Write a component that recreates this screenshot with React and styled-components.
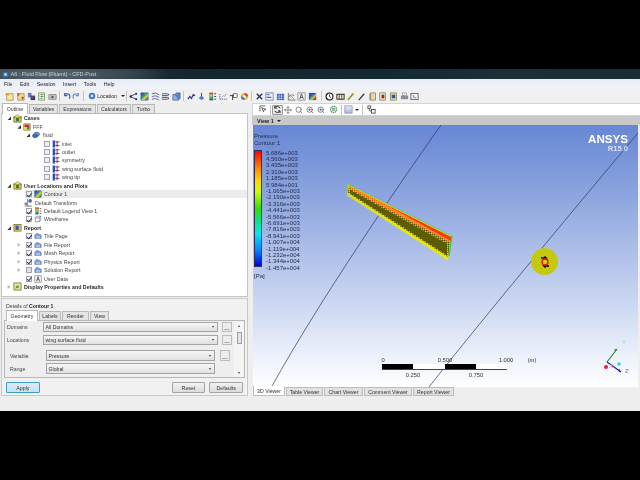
import React from "react";
import styled, { createGlobalStyle } from "styled-components";
import { Move, ZoomIn, Search } from "lucide-react";

const GlobalStyle = createGlobalStyle`
  html, body { margin: 0; padding: 0; background: #000; }
  * { box-sizing: border-box; }
`;

const Page = styled.div`
  width: 640px;
  height: 480px;
  background: #000;
  padding-top: 69px;
  overflow: hidden;
  font-family: "Liberation Sans", Arial, sans-serif;
  color: #222;
`;

const Win = styled.div`
  width: 640px;
  height: 342px;
  background: #eeeeee;
  display: flex;
  flex-direction: column;
  filter: blur(0.4px);
`;

const TitleBar = styled.div`
  height: 10px;
  display: flex;
  align-items: center;
  gap: 1.5px;
  padding-left: 2px;
  font-size: 5.5px;
  color: #c8d0d2;
  background: radial-gradient(ellipse 120px 16px at 50px 50%, #5c6a70 0%, #34444c 70%, transparent 100%),
    linear-gradient(90deg, #2a3a42 0%, #15262e 30%, #122a32 60%, #1c3038 80%, #1a2c34 100%);
`;

const MenuBar = styled.div`
  height: 10px;
  display: flex;
  align-items: center;
  gap: 7.5px;
  padding-left: 4px;
  font-size: 5.3px;
  background: linear-gradient(#e6ebf5, #f0f3f8);
`;

const ToolBar = styled.div`
  height: 14px;
  display: flex;
  align-items: center;
  padding-left: 4.5px;
  background: #f0f0f0;
`;

const Slot = styled.span`
  width: 10.7px;
  flex: none;
  display: flex;
  align-items: center;
  justify-content: center;
`;

const Sep = styled.span`
  width: 1px;
  height: 10px;
  flex: none;
  margin: 0 ${(p) => p.$m ?? 1}px;
  background: #c4c4c4;
`;

const LocationBtn = styled.span`
  width: 40px;
  flex: none;
  display: flex;
  align-items: center;
  gap: 1px;
  padding-left: 3px;
  font-size: 5.2px;
`;

const Caret = styled.span`
  width: 0;
  height: 0;
  margin-left: ${(p) => p.$ml ?? 3}px;
  border-left: 2px solid transparent;
  border-right: 2px solid transparent;
  border-top: 2px solid #222;
`;

const Main = styled.div`
  flex: 1;
  display: flex;
  min-height: 0;
`;

const LeftCol = styled.div`
  width: 251px;
  flex: none;
  padding-left: 1px;
  display: flex;
  flex-direction: column;
`;

const TabRow = styled.div`
  height: 11px;
  display: flex;
  align-items: flex-end;
  gap: 1px;
  padding-left: 1px;
`;

const Tab = styled.div`
  width: ${(p) => p.$w}px;
  height: ${(p) => (p.$on ? 11 : 10)}px;
  display: flex;
  align-items: center;
  justify-content: center;
  font-size: 5.2px;
  color: #333;
  background: ${(p) => (p.$on ? "#fff" : "#e4e4e4")};
  border: 1px solid #b8b8b8;
  border-bottom: ${(p) => (p.$on ? "none" : "1px solid #b8b8b8")};
  position: relative;
  z-index: ${(p) => (p.$on ? 1 : 0)};
`;

const TreeBox = styled.div`
  height: 184px;
  width: 247px;
  background: #fff;
  border: 1px solid #c4c4c4;
  margin-top: -1px;
`;

const Row = styled.div`
  height: 8.45px;
  display: flex;
  align-items: center;
  padding-left: ${(p) => p.$indent}px;
  font-size: 5.3px;
  font-weight: ${(p) => (p.$bold ? 700 : 400)};
  background: ${(p) => (p.$sel ? "linear-gradient(90deg, transparent 23px, #ececec 23px)" : "transparent")};
  color: ${(p) => (p.$bold ? "#2a2a2a" : "#444")};
  white-space: nowrap;
`;

const Expander = styled.span`
  width: 4px;
  height: 4px;
  flex: none;
  margin-right: ${(p) => p.$gap ?? 2}px;
  clip-path: ${(p) => (p.$kind === "open" ? "polygon(100% 10%, 100% 100%, 10% 100%)" : "polygon(15% 0, 85% 50%, 15% 100%)")};
  background: ${(p) => (p.$kind === "open" ? "#333" : "#b4b4b4")};
`;

const Check = styled.span`
  width: 6px;
  height: 6px;
  flex: none;
  margin-right: 2px;
  border: 1px solid #a4a4ae;
  background: ${(p) => (p.$off ? "#e0e0e0" : p.$on ? "#f2f2f6" : "#eeeeee")};
  position: relative;
  &::after {
    content: "";
    display: ${(p) => (p.$on ? "block" : "none")};
    position: absolute;
    left: 0.6px;
    top: -0.4px;
    width: 2px;
    height: 3.6px;
    border-right: 1px solid #33395c;
    border-bottom: 1px solid #33395c;
    transform: rotate(40deg);
  }
`;

const IconWrap = styled.span`
  width: ${(p) => p.$w ?? 8}px;
  flex: none;
  display: flex;
  align-items: center;
  margin-right: ${(p) => p.$mr ?? 2}px;
`;

const DetailsBox = styled.div`
  margin-top: 1px;
  width: 247px;
  height: 98px;
  border: 1px solid #c8c8c8;
  background: #f1f1f1;
  padding: 3px 2px 0 2px;
  display: flex;
  flex-direction: column;
`;

const DetailsTitle = styled.div`
  font-size: 5.2px;
  height: 8px;
  padding-left: 2px;
  display: flex;
  align-items: center;
  gap: 1.4px;
  color: #444;
  b { color: #222; }
`;

const DetailTabs = styled(TabRow)`
  height: 11px;
  margin-left: 1px;
  padding-left: 1px;
`;

const DetailBody = styled.div`
  width: 241px;
  height: 58px;
  margin-top: -1px;
  background: #eeeeee;
  border: 1px solid #b8b8b8;
  padding: 1px 0 0 0;
  display: flex;
`;

const Fields = styled.div`
  flex: 1;
  display: flex;
  flex-direction: column;
`;

const FieldRow = styled.div`
  height: ${(p) => p.$h ?? 10}px;
  margin-bottom: ${(p) => p.$mb ?? 3}px;
  display: flex;
  align-items: stretch;
  padding-left: ${(p) => p.$pad}px;
  font-size: 5.2px;
  color: #444;
`;

const FieldLabel = styled.span`
  width: 36px;
  flex: none;
  display: flex;
  align-items: center;
`;

const Select = styled.span`
  width: ${(p) => p.$w}px;
  flex: none;
  border: 1px solid #a4a4a4;
  background: linear-gradient(#f6f6f6, #e0e0e0);
  display: flex;
  align-items: center;
  justify-content: space-between;
  padding: 0 3px 0 1.5px;
  color: #333;
`;

const Dots = styled.span`
  width: 10px;
  flex: none;
  margin-left: ${(p) => p.$ml}px;
  border: 1px solid #bcbcbc;
  background: #ececec;
  display: flex;
  align-items: flex-end;
  justify-content: center;
  font-size: 6px;
  font-weight: 700;
  line-height: 6px;
  letter-spacing: 0.2px;
  color: #444;
`;

const ScrollBar = styled.div`
  width: 10px;
  flex: none;
  display: flex;
  flex-direction: column;
  align-items: center;
  justify-content: space-between;
  padding: 3px 0 3px;
  background: #f4f4f4;
`;

const Thumb = styled.span`
  width: 5px;
  height: 12px;
  margin-bottom: 24px;
  border: 1px solid #a0a0a0;
  background: #e4e4e4;
`;

const Tri = styled.span`
  width: 0;
  height: 0;
  border-left: 1.5px solid transparent;
  border-right: 1.5px solid transparent;
  border-${(p) => (p.$up ? "bottom" : "top")}: 2px solid #444;
`;

const BtnRow = styled.div`
  margin-top: 4px;
  padding: 0 2px 0 2px;
  display: flex;
  align-items: center;
  gap: 4px;
`;

const Btn = styled.span`
  width: ${(p) => p.$w}px;
  height: 11px;
  display: flex;
  align-items: center;
  justify-content: center;
  font-size: 5.3px;
  color: #333;
  background: ${(p) => (p.$primary ? "linear-gradient(#dbeaf5, #c9e0f0)" : "linear-gradient(#f2f2f2, #dcdcdc)")};
  border: 1px solid ${(p) => (p.$primary ? "#3d9fc4" : "#a4a4a4")};
  border-radius: 1px;
  margin-left: ${(p) => p.$ml ?? 0}px;
`;

const RightCol = styled.div`
  flex: 1;
  display: flex;
  flex-direction: column;
  padding-left: 1px;
  min-width: 0;
`;

const ViewTools = styled.div`
  height: 13px;
  display: flex;
  align-items: center;
  padding-left: 5.5px;
  background: #fff;
  border: 1px solid #d4d4d4;
  border-right: none;
`;

const VSlot = styled.span`
  width: ${(p) => p.$w ?? 10.8}px;
  height: 10px;
  flex: none;
  display: flex;
  align-items: center;
  justify-content: center;
  color: #3a3a3a;
  background: ${(p) => (p.$on ? "#e6e6e6" : "transparent")};
  border: ${(p) => (p.$on ? "1px solid #9a9a9a" : "none")};
  border-radius: 1px;
`;

const ViewHead = styled.div`
  height: 9px;
  display: flex;
  align-items: center;
  padding-left: 5px;
  font-size: 5.4px;
  font-weight: 700;
  background: #c8c8c8;
  color: #222;
`;

const Viewport = styled.div`
  position: relative;
  height: 262px;
  margin-left: 1px;
  margin-right: 2px;
  background: linear-gradient(#6786d4 0%, #8aa3de 25%, #b3c4ea 52%, #dbe4f6 78%, #ffffff 100%);
`;

const Canvas = styled.svg`
  position: absolute;
  left: 0;
  top: 0;
`;

const Legend = styled.div`
  position: absolute;
  left: 1px;
  top: 8px;
  font-size: 6px;
  line-height: 6.4px;
  color: #262c4c;
`;

const LegendHead = styled.div`
  line-height: 7px;
`;

const LegendBody = styled.div`
  display: flex;
  gap: 4px;
  margin-top: 2px;
`;

const LegendBar = styled.div`
  width: 8px;
  height: 117px;
  margin-top: 1px;
  border: 1px solid #30305a;
  background: linear-gradient(#ff0000 0%, #ff8000 14%, #ffd800 26%, #c8ff00 36%, #30e000 50%, #00e890 62%, #00e8f0 72%, #0090ff 85%, #0000e0 100%);
`;

const LegendLabels = styled.div`
  display: flex;
  flex-direction: column;
  white-space: nowrap;
  margin-top: 0.5px;
`;

const Unit = styled.div`
  margin-top: 2px;
`;

const Logo = styled.div`
  position: absolute;
  right: 10px;
  top: 7px;
  text-align: right;
  color: #fff;
  font-weight: 700;
  font-size: 11.6px;
  line-height: 13px;
  small {
    display: block;
    font-size: 7.6px;
    line-height: 7px;
    color: #d6e0f4;
  }
`;

const Scale = styled.div`
  position: absolute;
  left: 129px;
  top: 232px;
  width: 160px;
  font-size: 5.8px;
  color: #333;
`;

const ScaleLabels = styled.div`
  position: relative;
  height: 7px;
`;

const ScaleMark = styled.span`
  position: absolute;
  left: ${(p) => p.$x}px;
  transform: translateX(-50%);
`;

const ScaleBar = styled.div`
  width: 125px;
  height: 6px;
  margin-bottom: 1.5px;
  display: flex;
  border-bottom: 1px solid #444;
`;

const ScaleSeg = styled.span`
  flex: 1;
  background: ${(p) => (p.$black ? "#000" : "#fff")};
`;

const Spot = styled.div`
  position: absolute;
  left: 278px;
  top: 123px;
  width: 27px;
  height: 27px;
  border-radius: 50%;
  background: #c5c90e;
  display: flex;
  align-items: center;
  justify-content: center;
`;

const AxisLabel = styled.span`
  position: absolute;
  left: ${(p) => p.$x}px;
  top: ${(p) => p.$y}px;
  font-size: 6px;
  color: ${(p) => p.$c};
`;

const ViewerTabs = styled.div`
  height: 10px;
  display: flex;
  align-items: flex-start;
  gap: 1px;
  margin-left: 1px;
`;

const ViewerTab = styled.div`
  width: ${(p) => p.$w}px;
  height: ${(p) => (p.$on ? 10 : 9)}px;
  margin-top: ${(p) => (p.$on ? -1 : 0)}px;
  display: flex;
  align-items: center;
  justify-content: center;
  font-size: 5.2px;
  color: #333;
  background: ${(p) => (p.$on ? "#fff" : "#e2e2e2")};
  border: 1px solid #bcbcbc;
  border-top: ${(p) => (p.$on ? "none" : "1px solid #bcbcbc")};
  position: relative;
`;

const ICONS = {
  newcase: <><rect x="2" y="2" width="7" height="7" fill="#f4e8a8" stroke="#8a7a30" strokeWidth=".7" /><path d="M0 3l2-2 1 2 2-1-1 2z" fill="#e08a10" /></>,
  loadcase: <><rect x="2" y="2" width="7" height="7" fill="#efdc88" stroke="#8a7a30" strokeWidth=".7" /><path d="M1 1l3 1-1 3zM6 5l3 1-2 3z" fill="#c83a20" /></>,
  save: <><rect x="1" y="1" width="4" height="5" fill="#6a78b8" /><rect x="4" y="4" width="5" height="5" fill="#30406e" /><rect x="5" y="5" width="2" height="1.5" fill="#e04040" /></>,
  script: <><rect x="2" y="1" width="6.5" height="8" fill="#e6f2d8" stroke="#4c7a38" strokeWidth=".7" /><path d="M4 3h3M4 5h3M4 7h2" stroke="#2a6a2a" strokeWidth=".8" /></>,
  camera: <><rect x="1" y="3" width="8" height="5" fill="#c8c8c0" stroke="#6c6c64" strokeWidth=".7" /><circle cx="5" cy="5.5" r="1.4" fill="#565650" /></>,
  undo: <path d="M8 7.5A3 3 0 1 0 3 3M3 1v3h3" fill="none" stroke="#2e5ab8" strokeWidth="1.2" />,
  redo: <path d="M2 7.5A3 3 0 1 1 7 3M7 1v3H4" fill="none" stroke="#6a8cc8" strokeWidth="1.2" />,
  location: <><circle cx="5" cy="5" r="4" fill="#3b74c4" /><circle cx="5" cy="5" r="1.8" fill="#cfe0f4" /></>,
  branch: <><path d="M1 5l7-3M1 5l7 3" stroke="#34406e" strokeWidth="1" /><circle cx="2" cy="5" r="1.4" fill="#2a3a6a" /><circle cx="8" cy="2" r="1.2" fill="#2a3a6a" /><circle cx="8" cy="8" r="1.2" fill="#2a3a6a" /></>,
  contour: <><rect x="1" y="1" width="8" height="8" fill="#26a088" stroke="#2c4a7a" strokeWidth=".6" /><path d="M1 9l8-8v4l-4 4z" fill="#e0c030" /><rect x="1" y="1" width="3" height="3" fill="#3050c0" /></>,
  lines: <path d="M1 2q4-2 8 1M1 5q4-2 8 1M1 8q4-2 8 1" fill="none" stroke="#5060a0" strokeWidth="1" />,
  lines2: <path d="M1 2h6l2 1-2 1H1M1 6h6l2 1-2 1H1" fill="none" stroke="#404a80" strokeWidth="1" />,
  cubes: <><rect x="1" y="3" width="6" height="6" fill="#8fb4e4" stroke="#2c4a80" strokeWidth=".7" /><path d="M3 3l2-2h4v6l-2 2" fill="#5a86c8" stroke="#2c4a80" strokeWidth=".7" /></>,
  zigzag: <path d="M1 8l2-3 2 2 2-4 2 1" fill="none" stroke="#34458c" strokeWidth="1.5" />,
  pin: <><path d="M5 1v4" stroke="#333" strokeWidth="1" /><path d="M2 7l3-3 3 3-3 2z" fill="#4a7ac8" /></>,
  legend: <><rect x="2" y="1" width="3.5" height="8" fill="url(#icoRainbow)" stroke="#444" strokeWidth=".4" /><path d="M7 2h2M7 5h2M7 8h2" stroke="#333" strokeWidth="1" /></>,
  points: <path d="M1 8h8M1 8V2M3 6l2-2M6 5l2-3" stroke="#5566a0" strokeWidth="1" strokeDasharray="1.4 .8" fill="none" />,
  probe: <><path d="M1 4h5M4 9V3" stroke="#333" strokeWidth="1" /><rect x="5" y="2" width="4" height="4" fill="#f8f8f8" stroke="#333" strokeWidth=".7" /></>,
  color: <><circle cx="5" cy="5" r="4" fill="#e8c030" /><path d="M5 5V1a4 4 0 0 1 4 4z" fill="#d84040" /><path d="M5 5v4a4 4 0 0 1-4-4z" fill="#3080d0" /><circle cx="5" cy="5" r="1.4" fill="#fff" /></>,
  x: <path d="M2 2l6 6M8 2L2 8" stroke="#2a3a60" strokeWidth="1.6" />,
  chart: <><rect x="1" y="1" width="8" height="8" fill="#f2f4fa" stroke="#4060a0" strokeWidth=".7" /><path d="M2 3h3M2 6h5" stroke="#3a66c8" strokeWidth="1.2" /></>,
  grid: <><rect x="1" y="2" width="8" height="7" fill="#3c5cb8" /><path d="M3.5 2v7M6 2v7M1 4.5h8M1 7h8" stroke="#dce4f4" strokeWidth=".6" /></>,
  plot: <><path d="M1.5 1v8h8" fill="none" stroke="#555" strokeWidth=".8" /><path d="M2 3l3 2 3 3" fill="none" stroke="#c04060" strokeWidth=".8" /><path d="M2 6l3-3 3 1" fill="none" stroke="#3060b0" strokeWidth=".8" /></>,
  textA: <><rect x="1" y="1" width="8" height="8" fill="#f8f8f8" stroke="#666" strokeWidth=".7" /><path d="M3 8l2-6 2 6M3.8 6h2.4" fill="none" stroke="#222" strokeWidth=".8" /></>,
  mosaic: <><rect x="1" y="1" width="8" height="8" fill="#2850c0" /><path d="M1 9l8-8v8z" fill="#e0b020" /><path d="M5 9l4-4v4z" fill="#d83030" /><path d="M2 6l3-3 2 1-4 4z" fill="#30b070" /></>,
  clock: <><circle cx="5" cy="5" r="3.8" fill="#fff" stroke="#111" strokeWidth="1.2" /><path d="M5 2.6V5l1.6 1" fill="none" stroke="#111" strokeWidth=".9" /></>,
  film: <><rect x="1" y="2.5" width="8" height="5.5" fill="#f4f0d8" stroke="#1a1a1a" strokeWidth="1" /><path d="M3.6 2.5v5.5M6.4 2.5v5.5" stroke="#1a1a1a" strokeWidth=".8" /></>,
  wand: <><path d="M2 9l5-6" stroke="#7c8c20" strokeWidth="1.6" /><circle cx="7.5" cy="2.5" r="1.4" fill="#c8a020" /></>,
  pen: <path d="M2 9l6-7" stroke="#3c3c3c" strokeWidth="1.5" />,
  book: <><rect x="3" y="1" width="5.5" height="8" fill="#e4dca8" stroke="#6a6a40" strokeWidth=".7" /><rect x="1.5" y="2" width="2" height="7" fill="#9a9468" /></>,
  bookred: <><rect x="2" y="1" width="6.5" height="8" fill="#f0e8c8" stroke="#6a5a40" strokeWidth=".7" /><rect x="4" y="3" width="3" height="4" fill="#a02030" /></>,
  bookblue: <><rect x="1.5" y="1" width="7" height="8" fill="#ecdfa0" stroke="#6a6a40" strokeWidth=".7" /><rect x="3" y="3" width="4" height="4" fill="#3a50b0" /></>,
  printer: <><rect x="3" y="1" width="4" height="3" fill="#eee" stroke="#777" strokeWidth=".6" /><rect x="1" y="4" width="8" height="4" fill="#8c8c94" /></>,
  console: <><rect x="1" y="1.5" width="8" height="7" fill="#f4f4f4" stroke="#445" strokeWidth=".8" /><path d="M3 3.5l1.5 1.5L3 6.5M5 6.5h2" fill="none" stroke="#224" strokeWidth=".7" /></>,
  cases: <><rect x="1" y="3" width="8" height="6" fill="#d8cc50" stroke="#5c5820" strokeWidth=".7" /><path d="M5 .5L9.5 4H.5z" fill="#f0e060" stroke="#5c5820" strokeWidth=".5" /><rect x="3.5" y="4.5" width="3" height="3.5" fill="#307040" /></>,
  cube3: <><rect x="1" y="1" width="8" height="8" fill="#e8d858" stroke="#605820" strokeWidth=".6" /><rect x="2" y="2" width="3" height="3" fill="#c02828" /><rect x="5" y="5" width="3" height="3" fill="#2a8a38" /><rect x="5" y="2" width="3" height="3" fill="#a03890" /></>,
  fluid: <><ellipse cx="6" cy="4" rx="3.5" ry="2.6" fill="#6f9ae0" stroke="#2a4a90" strokeWidth=".6" /><ellipse cx="3.8" cy="6" rx="3.3" ry="2.4" fill="#3d68c4" stroke="#1f3a80" strokeWidth=".6" /></>,
  boundary: <><rect x=".8" y="0.6" width="3" height="8.8" fill="#2a50c8" /><path d="M4 2.4h5.4M4 6.8h5.4M6.4 1v8" stroke="#7a1a28" strokeWidth="1" /></>,
  transform: <><path d="M4 1v8M1 9h8" stroke="#6c7488" strokeWidth="1" /><circle cx="6.8" cy="3.2" r="2" fill="#3868c0" /><rect x=".6" y="5" width="3" height="3" fill="#8c8c96" /></>,
  wire: <path d="M1.5 3.5h5v5h-5zM1.5 3.5L3.5 1.5h5v5L6.5 8.5M6.5 3.5l2-2" fill="none" stroke="#4c5464" strokeWidth=".7" />,
  report: <><rect x="1" y="1.5" width="8" height="7.5" fill="#d8c868" stroke="#5c5820" strokeWidth=".7" /><rect x="2.8" y="3" width="3.6" height="4.6" fill="#3a55a8" /></>,
  page: <><path d="M3.5 1.5L9 4v4H1V4z" fill="#7fa0d8" stroke="#3a5aa0" strokeWidth=".6" /><rect x="2.5" y="5" width="5" height="3" fill="#a8c0ea" /></>,
  display: <><rect x="1" y="1" width="8" height="8" fill="#e8e290" stroke="#5c5820" strokeWidth=".7" /><path d="M2.5 7.5l2-4 3 2z" fill="#3a9a50" /></>,
  arrowsel: <><path d="M1 1h6M1 1v6" stroke="#333" strokeWidth=".8" /><path d="M3 3l4.6 1.8-2 .6-.6 2z" fill="#f8f8f8" stroke="#222" strokeWidth=".7" /></>,
  rotate: <path d="M8 3.4A3.6 3.6 0 0 0 2 3M2 6.6A3.6 3.6 0 0 0 8 7M2 1v2.4h2.4M8 9V6.6H5.6" fill="none" stroke="#222" strokeWidth="1" />,
  gear: <><circle cx="5" cy="5" r="3.4" fill="none" stroke="#4a9a58" strokeWidth="1.4" strokeDasharray="1.6 .7" /><circle cx="5" cy="5" r="1.6" fill="#b0c8c0" stroke="#555" strokeWidth=".5" /></>,
  square: <rect x="1" y="1" width="8" height="8" fill="url(#icoSquare)" stroke="#7a84b0" strokeWidth=".8" />,
  tree: <><rect x="1" y="1" width="3" height="3" fill="#fff" stroke="#222" strokeWidth=".8" /><rect x="5" y="5" width="4" height="4" fill="#fff" stroke="#222" strokeWidth=".8" /><path d="M2.5 4v2.5H5" fill="none" stroke="#222" strokeWidth=".7" /></>,
};

const Ico = ({ name, size = 9 }) => (
  <svg width={size} height={size} viewBox="0 0 10 10">
    {ICONS[name]}
  </svg>
);

// gradients used by a few of the small icons
const IconDefs = () => (
  <svg width="0" height="0" style={{ position: "absolute" }}>
    <defs>
      <linearGradient id="icoRainbow" x1="0" y1="0" x2="0" y2="1">
        <stop offset="0" stopColor="#e02020" />
        <stop offset=".35" stopColor="#e8d020" />
        <stop offset=".65" stopColor="#20c0a0" />
        <stop offset="1" stopColor="#2040d0" />
      </linearGradient>
      <linearGradient id="icoSquare" x1="0" y1="0" x2="0" y2="1">
        <stop offset="0" stopColor="#eef0fa" />
        <stop offset="1" stopColor="#a8b4dc" />
      </linearGradient>
    </defs>
  </svg>
);

const Slots = ({ names }) =>
  names.map((n, i) => (
    <Slot key={i}>
      <Ico name={n} />
    </Slot>
  ));

const TREE = [
  { indent: 5, exp: "open", icon: "cases", w: 9, text: "Cases", bold: true, mr: 2 },
  { indent: 15, exp: "open", icon: "cube3", text: "FFF" },
  { indent: 24, exp: "open", icon: "fluid", text: "fluid", mr: 3 },
  { indent: 42, check: "blank", icon: "boundary", w: 8, text: "inlet", mr: 2 },
  { indent: 42, check: "blank", icon: "boundary", w: 8, text: "outlet", mr: 2 },
  { indent: 42, check: "blank", icon: "boundary", w: 8, text: "symmetry", mr: 2 },
  { indent: 42, check: "blank", icon: "boundary", w: 8, text: "wing surface fluid", mr: 2 },
  { indent: 42, check: "blank", icon: "boundary", w: 8, text: "wing tip", mr: 2 },
  { indent: 5, exp: "open", icon: "cases", w: 9, text: "User Locations and Plots", bold: true },
  { indent: 24, check: "on", icon: "contour", text: "Contour 1", sel: true, mr: 2 },
  { indent: 22, icon: "transform", w: 9, text: "Default Transform" },
  { indent: 24, check: "on", icon: "legend", text: "Default Legend View 1", mr: 2 },
  { indent: 24, check: "on", icon: "wire", text: "Wireframe", mr: 2 },
  { indent: 5, exp: "open", icon: "report", w: 9, text: "Report", bold: true },
  { indent: 24, check: "on", icon: "page", text: "Title Page", mr: 2 },
  { indent: 15, exp: "closed", check: "on", icon: "page", text: "File Report", mr: 2, gap: 5 },
  { indent: 15, exp: "closed", check: "on", icon: "page", text: "Mesh Report", mr: 2, gap: 5 },
  { indent: 15, exp: "closed", check: "on", icon: "page", text: "Physics Report", mr: 2, gap: 5 },
  { indent: 15, exp: "closed", check: "off", icon: "page", text: "Solution Report", mr: 2, gap: 5 },
  { indent: 24, check: "on", icon: "textA", text: "User Data", mr: 2 },
  { indent: 5, exp: "closed", icon: "display", w: 9, text: "Display Properties and Defaults", bold: true },
];

const TreeRow = ({ item }) => (
  <Row $indent={item.indent} $bold={item.bold} $sel={item.sel}>
    {item.exp && <Expander $kind={item.exp} $gap={item.gap} />}
    {item.check && <Check $on={item.check === "on"} $off={item.check === "off"} />}
    <IconWrap $w={item.w} $mr={item.mr}>
      <Ico name={item.icon} size={item.w ?? 8} />
    </IconWrap>
    {item.text}
  </Row>
);

const LEGEND = [
  "5.686e+003", "4.560e+003", "3.435e+003", "2.310e+003", "1.185e+003", "5.984e+001",
  "-1.065e+003", "-2.190e+003", "-3.316e+003", "-4.441e+003", "-5.566e+003", "-6.691e+003",
  "-7.816e+003", "-8.941e+003", "-1.007e+004", "-1.119e+004", "-1.232e+004", "-1.344e+004", "-1.457e+004",
];

// viewport is placed at x=253, y=125 in the window
const SceneLines = () => (
  <Canvas width="385" height="262" viewBox="253 125 385 262">
    <defs>
      <pattern id="speck" width="2" height="2" patternUnits="userSpaceOnUse">
        <rect width="2" height="2" fill="#8a8408" />
        <rect width="1" height="1" fill="#585800" />
        <rect x="1" y="1" width="1" height="1" fill="#d8d420" />
      </pattern>
      <pattern id="hot" width="2" height="2" patternUnits="userSpaceOnUse">
        <rect width="2" height="2" fill="#e0a810" />
        <rect width="1" height="1" fill="#ec6c10" />
      </pattern>
    </defs>
    <path d="M441 125C395 190 320 300 272 386" fill="none" stroke="#2a3768" strokeWidth=".7" />
    <path d="M638 133C590 190 480 322 429 387" fill="none" stroke="#2a3768" strokeWidth=".7" />
    {/* wing */}
    <polygon points="348,184 452,236 448,260 347,194" fill="#e8e800" />
    <polygon points="349,186 451,238 448,257 348,193" fill="url(#speck)" />
    <polygon points="350,190 447,244 447,255 350,193" fill="#5e5c00" />
    <polygon points="349,185.5 451,237 451,243 350,189" fill="url(#hot)" />
    <polygon points="385,204 451,237 451,241" fill="#f03c10" />
    <path d="M348 184L452 236" stroke="#38c888" strokeWidth=".8" />
    <path d="M452 236L449 256" stroke="#40c840" strokeWidth="1.4" />
    <path d="M348 184L347 193" stroke="#90d020" strokeWidth="1.4" />
    <path d="M347 195L448 260" stroke="#e8e820" strokeWidth="1" />
    {/* triad */}
    <path d="M607 362L617 349" stroke="#188a20" strokeWidth="1.1" />
    <path d="M617 349l-3 .6 1.8 1.8z" fill="#188a20" />
    <path d="M607 362L621 372" stroke="#1a1aa0" strokeWidth="1.1" />
    <path d="M621 372l-1.6-3-1.4 2z" fill="#1a1aa0" />
    <circle cx="606" cy="367" r="2" fill="#e82040" />
    <circle cx="619" cy="364" r="1.8" fill="#30d8d0" />
  </Canvas>
);

const App = () => (
  <Page>
    <GlobalStyle />
    <IconDefs />
    <Win>
      <TitleBar>
        <Ico name="location" size={7} />
        <span>A6 : Fluid Flow (Fluent) - CFD-Post</span>
      </TitleBar>
      <MenuBar>
        {["File", "Edit", "Session", "Insert", "Tools", "Help"].map((m) => (
          <span key={m}>{m}</span>
        ))}
      </MenuBar>
      <ToolBar>
        <Slots names={["newcase", "loadcase", "save", "script", "camera"]} />
        <Sep />
        <Slots names={["undo", "redo"]} />
        <Sep />
        <LocationBtn>
          <Ico name="location" size={8} />
          Location
          <Caret />
        </LocationBtn>
        <Sep />
        <Slots names={["branch", "contour", "lines", "lines2", "cubes"]} />
        <Sep $m={1.5} />
        <Slots names={["zigzag", "pin", "legend", "points", "probe", "color"]} />
        <Sep $m={1.5} />
        <Slots names={["x", "chart", "grid", "plot", "textA", "mosaic"]} />
        <Sep $m={2.5} />
        <Slots names={["clock", "film", "wand", "pen", "book", "bookred", "bookblue", "printer", "console"]} />
      </ToolBar>
      <Main>
        <LeftCol>
          <TabRow>
            <Tab $w={26} $on>Outline</Tab>
            <Tab $w={29}>Variables</Tab>
            <Tab $w={37}>Expressions</Tab>
            <Tab $w={34}>Calculators</Tab>
            <Tab $w={23}>Turbo</Tab>
          </TabRow>
          <TreeBox>
            {TREE.map((item) => (
              <TreeRow key={item.text + item.indent} item={item} />
            ))}
          </TreeBox>
          <DetailsBox>
            <DetailsTitle>
              Details of <b>Contour 1</b>
            </DetailsTitle>
            <DetailTabs>
              <Tab $w={32} $on>Geometry</Tab>
              <Tab $w={22}>Labels</Tab>
              <Tab $w={27}>Render</Tab>
              <Tab $w={19}>View</Tab>
            </DetailTabs>
            <DetailBody>
              <Fields>
                <FieldRow $pad={2}>
                  <FieldLabel>Domains</FieldLabel>
                  <Select $w={175}>All Domains<Tri /></Select>
                  <Dots $ml={4}>...</Dots>
                </FieldRow>
                <FieldRow $pad={2} $mb={5}>
                  <FieldLabel>Locations</FieldLabel>
                  <Select $w={175}>wing surface fluid<Tri /></Select>
                  <Dots $ml={4}>...</Dots>
                </FieldRow>
                <FieldRow $pad={5} $h={11} $mb={2}>
                  <FieldLabel>Variable</FieldLabel>
                  <Select $w={169}>Pressure<Tri /></Select>
                  <Dots $ml={5}>...</Dots>
                </FieldRow>
                <FieldRow $pad={5} $h={11}>
                  <FieldLabel>Range</FieldLabel>
                  <Select $w={169}>Global<Tri /></Select>
                </FieldRow>
              </Fields>
              <ScrollBar>
                <Tri $up />
                <Thumb />
                <Tri />
              </ScrollBar>
            </DetailBody>
            <BtnRow>
              <Btn $w={35} $primary>Apply</Btn>
              <Btn $w={35} $ml={128}>Reset</Btn>
              <Btn $w={35}>Defaults</Btn>
            </BtnRow>
          </DetailsBox>
        </LeftCol>
        <RightCol>
          <ViewTools>
            <VSlot><Ico name="arrowsel" /></VSlot>
            <Sep />
            <VSlot $on><Ico name="rotate" /></VSlot>
            <VSlot><Move size={8} strokeWidth={1.6} /></VSlot>
            <VSlot><Search size={8} strokeWidth={1.8} /></VSlot>
            <VSlot><ZoomIn size={8} strokeWidth={1.8} /></VSlot>
            <VSlot><ZoomIn size={8} strokeWidth={2} color="#3a4a7a" /></VSlot>
            <VSlot $w={14}><Ico name="gear" /></VSlot>
            <Sep />
            <VSlot><Ico name="square" /></VSlot>
            <Caret $ml={1} />
            <Sep $m={3} />
            <VSlot><Ico name="tree" /></VSlot>
          </ViewTools>
          <ViewHead>
            View 1
            <Caret />
          </ViewHead>
          <Viewport>
            <SceneLines />
            <Legend>
              <LegendHead>Pressure</LegendHead>
              <LegendHead>Contour 1</LegendHead>
              <LegendBody>
                <LegendBar />
                <LegendLabels>
                  {LEGEND.map((v) => (
                    <span key={v}>{v}</span>
                  ))}
                </LegendLabels>
              </LegendBody>
              <Unit>[Pa]</Unit>
            </Legend>
            <Logo>
              ANSYS
              <small>R15.0</small>
            </Logo>
            <Scale>
              <ScaleLabels>
                <ScaleMark $x={1}>0</ScaleMark>
                <ScaleMark $x={63}>0.500</ScaleMark>
                <ScaleMark $x={124}>1.000</ScaleMark>
                <ScaleMark $x={150}>(m)</ScaleMark>
              </ScaleLabels>
              <ScaleBar>
                <ScaleSeg $black />
                <ScaleSeg />
                <ScaleSeg $black />
                <ScaleSeg />
              </ScaleBar>
              <ScaleLabels>
                <ScaleMark $x={31}>0.250</ScaleMark>
                <ScaleMark $x={94}>0.750</ScaleMark>
              </ScaleLabels>
            </Scale>
            <Spot>
              <svg width="14" height="14" viewBox="0 0 14 14">
                <path d="M3 3h5l-1.5-1.5M11 11H6l1.5 1.5" fill="none" stroke="#000" strokeWidth="1.6" />
                <circle cx="7" cy="7" r="3" fill="none" stroke="#e81818" strokeWidth="1.4" />
                <circle cx="7" cy="7" r="1" fill="#f0d020" />
              </svg>
            </Spot>
            <AxisLabel $x={369} $y={214} $c="#a8d0ac">Y</AxisLabel>
            <AxisLabel $x={372} $y={243} $c="#7478ac">Z</AxisLabel>
            <AxisLabel $x={356} $y={238} $c="#e8b8be">X</AxisLabel>
          </Viewport>
          <ViewerTabs>
            <ViewerTab $w={32} $on>3D Viewer</ViewerTab>
            <ViewerTab $w={37}>Table Viewer</ViewerTab>
            <ViewerTab $w={39}>Chart Viewer</ViewerTab>
            <ViewerTab $w={48}>Comment Viewer</ViewerTab>
            <ViewerTab $w={41}>Report Viewer</ViewerTab>
          </ViewerTabs>
        </RightCol>
      </Main>
    </Win>
  </Page>
);

export default App;
